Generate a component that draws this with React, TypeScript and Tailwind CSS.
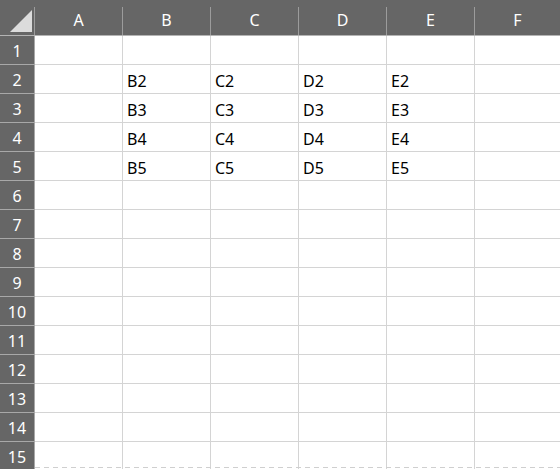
import React from "react";

const columns = ["A", "B", "C", "D", "E", "F"];
const rowCount = 15;

// cell text for the filled block B2:E5
const cellValue = (col: string, row: number) => {
  if (row >= 2 && row <= 5 && "BCDE".includes(col)) return `${col}${row}`;
  return "";
};

const CornerCell: React.FC = () => (
  <div className="flex h-full w-[35px] shrink-0">
    <div className="flex flex-1 items-end justify-end pb-[3px] pr-[2px]">
      <svg width="22" height="22" viewBox="0 0 22 22">
        <polygon points="0,22 22,22 22,0" fill="#dcdcdc" />
      </svg>
    </div>
    <div className="h-[28px] w-px self-end bg-[#9c9c9c]" />
  </div>
);

const ColumnHeader: React.FC<{ label: string; last: boolean }> = ({ label, last }) => (
  <div className={`flex h-full ${last ? "flex-1" : "w-[88px] shrink-0"}`}>
    <div className="flex flex-1 items-center justify-center pt-[5px] text-[16px] text-white">
      {label}
    </div>
    {!last && <div className="h-[28px] w-px self-end bg-[#9c9c9c]" />}
  </div>
);

const Row: React.FC<{ index: number }> = ({ index }) => (
  <div className="flex h-[29px]">
    <div className="flex w-[35px] shrink-0 items-center justify-center border-b border-r border-[#a8a8a8] bg-[#666666] pt-[2px] text-[16px] text-white">
      {index}
    </div>
    {columns.map((col, i) => (
      <div
        key={col}
        className={`flex items-center border-b border-[#d4d4d4] pl-[4px] pt-[3px] text-[16px] text-black ${
          i === columns.length - 1 ? "flex-1" : "w-[88px] shrink-0 border-r"
        }`}
      >
        {cellValue(col, index)}
      </div>
    ))}
  </div>
);

export default function App() {
  const rows = Array.from({ length: rowCount }, (_, i) => i + 1);

  return (
    <div
      className="relative h-[469px] w-[560px] overflow-hidden bg-white"
      style={{ fontFamily: '"Noto Sans", "Open Sans", sans-serif' }}
    >
      {/* column headers */}
      <div className="flex h-[36px] border-b border-[#b4b4b4] bg-[#666666]">
        <CornerCell />
        {columns.map((col, i) => (
          <ColumnHeader key={col} label={col} last={i === columns.length - 1} />
        ))}
      </div>

      {/* grid */}
      <div className="flex flex-col">
        {rows.map((r) => (
          <Row key={r} index={r} />
        ))}
      </div>

      {/* page break line */}
      <div className="absolute left-[35px] right-0 top-[467px] h-px bg-[repeating-linear-gradient(to_right,#cfcfcf_0_5px,transparent_5px_9px)]" />
    </div>
  );
}
